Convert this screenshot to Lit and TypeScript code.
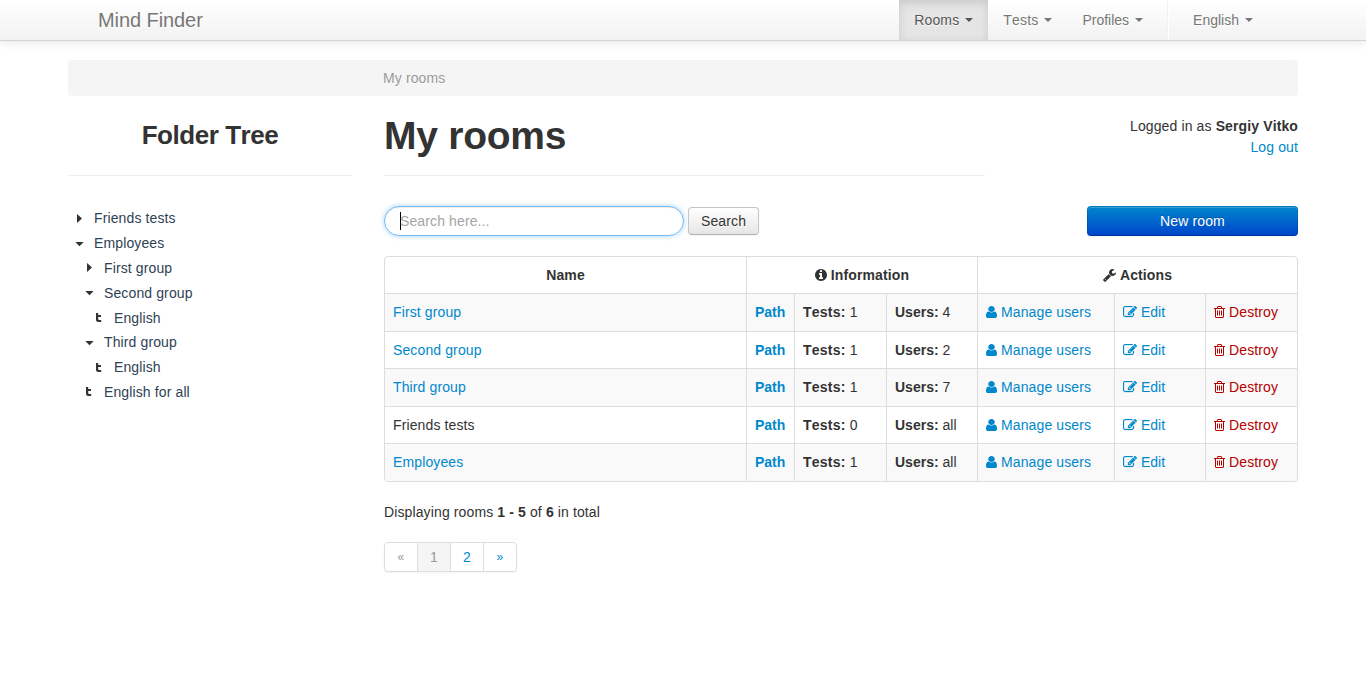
import { LitElement, html, css, svg } from "lit";
import { customElement } from "lit/decorators.js";

interface Glyph { box: string; w: number; h: number; d: string }

const ICONS: Record<string, Glyph> = {
  info: {
    box: "128 128 1536 1536", w: 12, h: 12,
    d: "M1152 1376v-160q0-14-9-23t-23-9h-96v-512q0-14-9-23t-23-9h-320q-14 0-23 9t-9 23v160q0 14 9 23t23 9h96v320h-96q-14 0-23 9t-9 23v160q0 14 9 23t23 9h448q14 0 23-9t9-23zm-128-896v-160q0-14-9-23t-23-9h-192q-14 0-23 9t-9 23v160q0 14 9 23t23 9h192q14 0 23-9t9-23zm640 416q0 209-103 385.5t-279.5 279.5-385.5 103-385.5-103-279.5-279.5-103-385.5 103-385.5 279.5-279.5 385.5-103 385.5 103 279.5 279.5 103 385.5z",
  },
  wrench: {
    box: "64 128 1664 1664", w: 13, h: 13,
    d: "M448 1472q0-26-19-45t-45-19-45 19-19 45 19 45 45 19 45-19 19-45zm644-420l-682 682q-37 37-90 37-52 0-91-37l-106-108q-38-36-38-90 0-53 38-91l681-681q39 98 114.5 173.5t173.5 114.5zm634-435q0 39-23 106-47 134-164.5 217.5t-258.5 83.5q-185 0-316.5-131.5t-131.5-316.5 131.5-316.5 316.5-131.5q58 0 121.5 16.5t107.5 46.5q16 11 16 28t-16 28l-293 169v224l193 107q5-3 79-48.5t135.5-81 70.5-35.5q15 0 23.5 10t8.5 25z",
  },
  user: {
    box: "256 128 1280 1536", w: 11, h: 12,
    d: "M1536 1399q0 109-62.5 187t-150.5 78h-854q-88 0-150.5-78t-62.5-187q0-85 8.5-160.5t31.5-152 58.5-131 94-89 134.5-34.5q131 128 313 128t313-128q76 0 134.5 34.5t94 89 58.5 131 31.5 152 8.5 160.5zm-256-887q0 159-112.5 271.5t-271.5 112.5-271.5-112.5-112.5-271.5 112.5-271.5 271.5-112.5 271.5 112.5 112.5 271.5z",
  },
  edit: {
    box: "0 128 1792 1536", w: 14, h: 12,
    d: "M888 1184l116-116-152-152-116 116v56h96v96h56zm440-720q-16-16-33 1l-350 350q-17 17-1 33t33-1l350-350q17-17 1-33zm80 594v190q0 119-84.5 203.5t-203.5 84.5h-832q-119 0-203.5-84.5t-84.5-203.5v-832q0-119 84.5-203.5t203.5-84.5h832q63 0 117 25 15 7 18 23 3 17-9 29l-49 49q-14 14-32 8-23-6-45-6h-832q-66 0-113 47t-47 113v832q0 66 47 113t113 47h832q66 0 113-47t47-113v-126q0-13 9-22l64-64q15-15 35-7t20 29zm-96-738l288 288-672 672h-288v-288zm444 132l-92 92-288-288 92-92q28-28 68-28t68 28l152 152q28 28 28 68t-28 68z",
  },
  trash: {
    box: "192 128 1408 1536", w: 11, h: 12,
    d: "M704 736v576q0 14-9 23t-23 9h-64q-14 0-23-9t-9-23v-576q0-14 9-23t23-9h64q14 0 23 9t9 23zm256 0v576q0 14-9 23t-23 9h-64q-14 0-23-9t-9-23v-576q0-14 9-23t23-9h64q14 0 23 9t9 23zm256 0v576q0 14-9 23t-23 9h-64q-14 0-23-9t-9-23v-576q0-14 9-23t23-9h64q14 0 23 9t9 23zm128 724v-948h-896v948q0 22 7 40.5t14.5 27 10.5 8.5h832q3 0 10.5-8.5t14.5-27 7-40.5zm-672-1076h448l-48-117q-7-9-17-11h-317q-10 2-17 11zm928 32v64q0 14-9 23t-23 9h-96v948q0 83-47 143.5t-113 60.5h-832q-66 0-113-58.5t-47-141.5v-952h-96q-14 0-23-9t-9-23v-64q0-14 9-23t23-9h309l70-167q15-37 54-63t79-26h320q40 0 79 26t54 63l70 167h309q14 0 23 9t9 23z",
  },
};

const icon = (name: string) => {
  const g = ICONS[name];
  return html`<svg class="icon ${name}" viewBox=${g.box} width=${g.w} height=${g.h} preserveAspectRatio="none">${svg`<path d=${g.d}></path>`}</svg>`;
};

type Kind = "closed" | "open" | "test";
const MARKS: Record<Kind, string> = {
  closed: "M2 0V9L7 4.5Z",
  open: "M0.3 3H8.7L4.5 7.3Z",
  test: "M1 0H3.2V2H6V4H3.2V6Q3.2 7 4.2 7H6.2V9H3.5Q1 9 1 6.5Z",
};

const TREE: { kind: Kind; depth: number; text: string }[] = [
  { kind: "closed", depth: 0, text: "Friends tests" },
  { kind: "open", depth: 0, text: "Employees" },
  { kind: "closed", depth: 1, text: "First group" },
  { kind: "open", depth: 1, text: "Second group" },
  { kind: "test", depth: 2, text: "English" },
  { kind: "open", depth: 1, text: "Third group" },
  { kind: "test", depth: 2, text: "English" },
  { kind: "test", depth: 1, text: "English for all" },
];

const ROOMS = [
  { name: "First group", link: true, tests: "1", users: "4" },
  { name: "Second group", link: true, tests: "1", users: "2" },
  { name: "Third group", link: true, tests: "1", users: "7" },
  { name: "Friends tests", link: false, tests: "0", users: "all" },
  { name: "Employees", link: true, tests: "1", users: "all" },
];

@customElement("app-root")
export class AppRoot extends LitElement {
  static styles = css`
    :host {
      display: block;
      height: 674px;
      overflow: hidden;
      background: #fff;
      color: #333;
      font: 14px/21px "Liberation Sans", Arial, sans-serif;
      font-kerning: none;
      letter-spacing: 0.12px;
    }
    * { box-sizing: border-box; }
    a { color: #08c; text-decoration: none; }
    h1, h2, p { margin: 0; }
    .navbar {
      height: 41px;
      padding: 0 98px;
      display: flex;
      line-height: 20px;
      letter-spacing: 0;
      color: #777;
      text-shadow: 0 1px 0 #fff;
      background: linear-gradient(#fff, #f2f2f2);
      border-bottom: 1px solid #d4d4d4;
      box-shadow: 0 1px 10px rgba(0, 0, 0, 0.1);
    }
    .brand { font-size: 20px; padding: 10px 0; margin-right: auto; letter-spacing: -0.08px; }
    .item { height: 40px; padding: 10px 15px; display: flex; align-items: flex-start; }
    .item.wide { letter-spacing: 0.16px; }
    .item.active { color: #555; background: #e5e5e5; box-shadow: inset 0 3px 8px rgba(0, 0, 0, 0.125); }
    .caret {
      margin: 8px 0 0 6px;
      border: 4px solid transparent;
      border-top-color: currentColor;
      border-bottom: 0;
    }
    .divider { width: 2px; height: 40px; margin: 0 9px 0 9px; background: #f2f2f2; border-right: 1px solid #fff; }
    .page { width: 1230px; margin: 19px 0 0 68px; }
    .crumbs {
      height: 36px;
      padding: 8px 15px 8px 315px;
      line-height: 20px;
      border-radius: 4px;
      color: #999;
      background: #f5f5f5;
      text-shadow: 0 1px 0 #fff;
    }
    .columns { display: grid; grid-template-columns: 284px 914px; column-gap: 32px; }
    .side-title {
      height: 80px;
      padding-top: 19px;
      border-bottom: 1px solid #eee;
      text-align: center;
      font-size: 26px;
      line-height: 40px;
      letter-spacing: -0.45px;
    }
    .tree { margin-top: 30px; padding-left: 7px; color: #2f4254; }
    .node { height: 24.8px; display: flex; align-items: center; line-height: 24px; }
    .depth1 { padding-left: 10px; }
    .depth2 { padding-left: 20px; }
    .mark { width: 9px; height: 9px; margin-right: 10px; fill: #333; flex: none; }
    .head { display: flex; justify-content: space-between; height: 80px; }
    .title {
      width: 601px;
      padding-top: 20px;
      border-bottom: 1px solid #eee;
      font-size: 39px;
      line-height: 40px;
      letter-spacing: -0.25px;
    }
    .login { padding-top: 20px; text-align: right; }
    .tools { height: 30px; margin-top: 30px; display: flex; align-items: center; }
    .search {
      width: 300px;
      height: 30px;
      padding: 4px 15px;
      line-height: 20px;
      display: flex;
      align-items: center;
      border: 1px solid rgba(82, 168, 236, 0.8);
      border-radius: 15px;
      color: #a5a5a5;
      box-shadow: inset 0 1px 1px rgba(0, 0, 0, 0.075), 0 0 5px rgba(82, 168, 236, 0.55);
    }
    .cursor { width: 1px; height: 18px; margin-right: -1px; background: #000; }
    .btn {
      height: 28px;
      margin-left: 4px;
      padding: 3px 12px;
      line-height: 20px;
      border: 1px solid #c5c5c5;
      border-bottom-color: #b3b3b3;
      border-radius: 4px;
      background: linear-gradient(#fff, #e6e6e6);
      text-shadow: 0 1px 1px rgba(255, 255, 255, 0.75);
      box-shadow: inset 0 1px 0 rgba(255, 255, 255, 0.2), 0 1px 2px rgba(0, 0, 0, 0.05);
    }
    .btn.primary {
      width: 211px;
      height: 30px;
      margin-left: auto;
      padding: 4px 12px;
      text-align: center;
      color: #fff;
      border-color: rgba(0, 0, 0, 0.1) rgba(0, 0, 0, 0.1) rgba(0, 0, 0, 0.25);
      background: linear-gradient(#08c, #04c) border-box;
      text-shadow: 0 -1px 0 rgba(0, 0, 0, 0.25);
    }
    .table {
      margin-top: 20px;
      border: 1px solid #ddd;
      border-radius: 4px;
      overflow: hidden;
    }
    .row {
      display: grid;
      grid-template-columns: 361px 48px 92px 91px 137px 91px 92px;
      height: 38px;
      border-top: 1px solid #ddd;
    }
    .row.header { height: 36px; border-top: 0; text-align: center; font-weight: bold; }
    .row:nth-child(even) { background: #f9f9f9; }
    .row:nth-child(odd):not(.header) { height: 37px; }
    .cell { padding: 8px; line-height: 21px; white-space: nowrap; }
    .cell + .cell { border-left: 1px solid #ddd; }
    .span2 { grid-column: span 3; }
    .icon { fill: currentColor; margin-right: 4px; vertical-align: -1px; }
    .edit { stroke: currentColor; stroke-width: 36px; }
    .wrench { vertical-align: -2px; }
    .danger { color: #b50000; }
    .tight { letter-spacing: 0; }
    .tests b { letter-spacing: 0.25px; }
    .summary { margin-top: 20px; line-height: 20px; }
    .pager {
      display: inline-flex;
      margin-top: 20px;
      height: 30px;
      border: 1px solid #ddd;
      border-radius: 4px;
      overflow: hidden;
      box-shadow: 0 1px 2px rgba(0, 0, 0, 0.05);
    }
    .pg { width: 33px; padding-top: 4px; line-height: 20px; text-align: center; color: #08c; }
    .pg + .pg { border-left: 1px solid #ddd; }
    .pg:first-child { width: 32px; }
    .arrow { font-size: 12px; }
    .pg.off { color: #999; }
    .current { background: #f5f5f5; }
  `;

  render() {
    return html`
      <nav class="navbar">
        <div class="brand">Mind Finder</div>
        <div class="item wide active">Rooms<span class="caret"></span></div>
        <div class="item wide">Tests<span class="caret"></span></div>
        <div class="item">Profiles<span class="caret"></span></div>
        <div class="divider"></div>
        <div class="item">English<span class="caret"></span></div>
      </nav>
      <div class="page">
        <div class="crumbs">My rooms</div>
        <div class="columns">
          <aside>
            <h2 class="side-title">Folder Tree</h2>
            <div class="tree">
              ${TREE.map((n) => html`
                <div class="node depth${n.depth}">
                  <svg class="mark" viewBox="0 0 9 9">${svg`<path d=${MARKS[n.kind]}></path>`}</svg>${n.text}
                </div>`)}
            </div>
          </aside>
          <main>
            <div class="head">
              <h1 class="title">My rooms</h1>
              <div class="login">Logged in as <b>Sergiy Vitko</b><br /><a>Log out</a></div>
            </div>
            <div class="tools">
              <div class="search"><span class="cursor"></span>Search here...</div>
              <div class="btn">Search</div>
              <div class="btn primary">New room</div>
            </div>
            <div class="table">
              <div class="row header">
                <div class="cell">Name</div>
                <div class="cell span2">${icon("info")}Information</div>
                <div class="cell span2">${icon("wrench")}Actions</div>
              </div>
              ${ROOMS.map((r) => html`
                <div class="row">
                  <div class="cell">${r.link ? html`<a>${r.name}</a>` : r.name}</div>
                  <div class="cell tight"><a><b>Path</b></a></div>
                  <div class="cell tests"><b>Tests:</b> ${r.tests}</div>
                  <div class="cell tight"><b>Users:</b> ${r.users}</div>
                  <div class="cell"><a>${icon("user")}Manage users</a></div>
                  <div class="cell tight"><a>${icon("edit")}Edit</a></div>
                  <div class="cell"><a class="danger">${icon("trash")}Destroy</a></div>
                </div>`)}
            </div>
            <p class="summary">Displaying rooms <b>1 - 5</b> of <b>6</b> in total</p>
            <div class="pager">
              <span class="pg arrow off">«</span><span class="pg off current">1</span><span class="pg">2</span><span class="pg arrow">»</span>
            </div>
          </main>
        </div>
      </div>
    `;
  }
}
